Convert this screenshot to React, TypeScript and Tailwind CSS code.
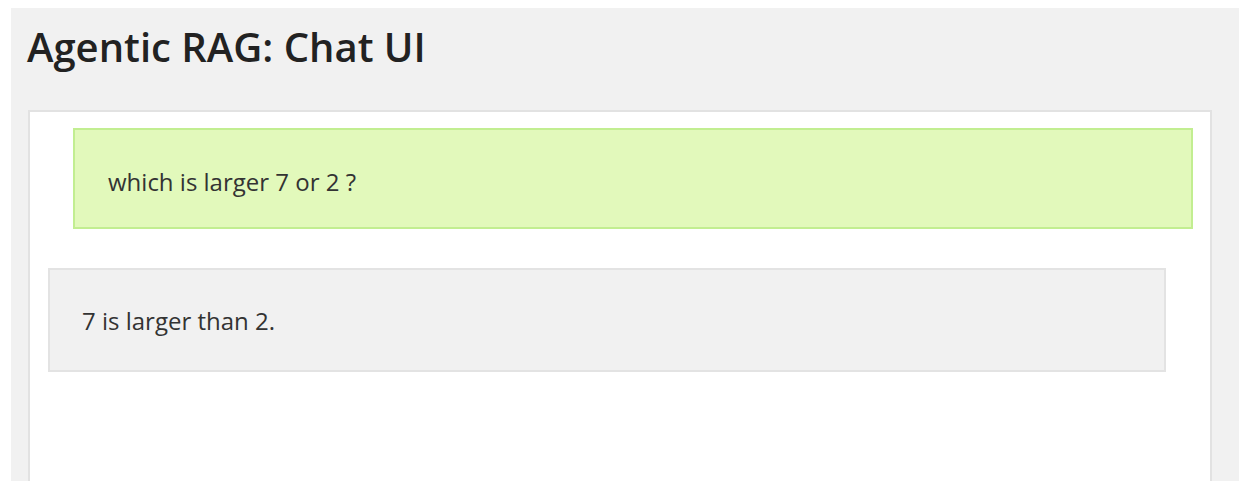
export default function App() {
  return (
    <div className="w-[1249px] h-[492px] bg-white pt-[8px] pl-[11px] pr-[10px] overflow-hidden font-['Open_Sans',sans-serif]">
      <div className="h-[473px] bg-[#f1f1f1] pl-[17px] pr-[27px] overflow-hidden">
        <h1 className="pt-[14px] pb-[38px] -ml-px text-[40px] leading-[50px] font-semibold text-[#222]">
          Agentic RAG: Chat UI
        </h1>
        <div className="h-[400px] bg-white border-2 border-[#e2e2e2] pt-[16px] flex flex-col gap-[39px]">
          <div className="ml-[43px] mr-[17px] h-[101px] bg-[#e2f9bb] border-2 border-[#c2ee91] flex items-center pl-[33px] pt-[6px]">
            <p className="text-[24px] leading-[32px] text-[#333]">which is larger 7 or 2 ?</p>
          </div>
          <div className="ml-[18px] mr-[44px] h-[104px] bg-[#f1f1f1] border-2 border-[#e3e3e3] flex items-center pl-[32px] pt-[1px]">
            <p className="text-[24px] leading-[32px] text-[#333]">7 is larger than 2.</p>
          </div>
        </div>
      </div>
    </div>
  );
}
